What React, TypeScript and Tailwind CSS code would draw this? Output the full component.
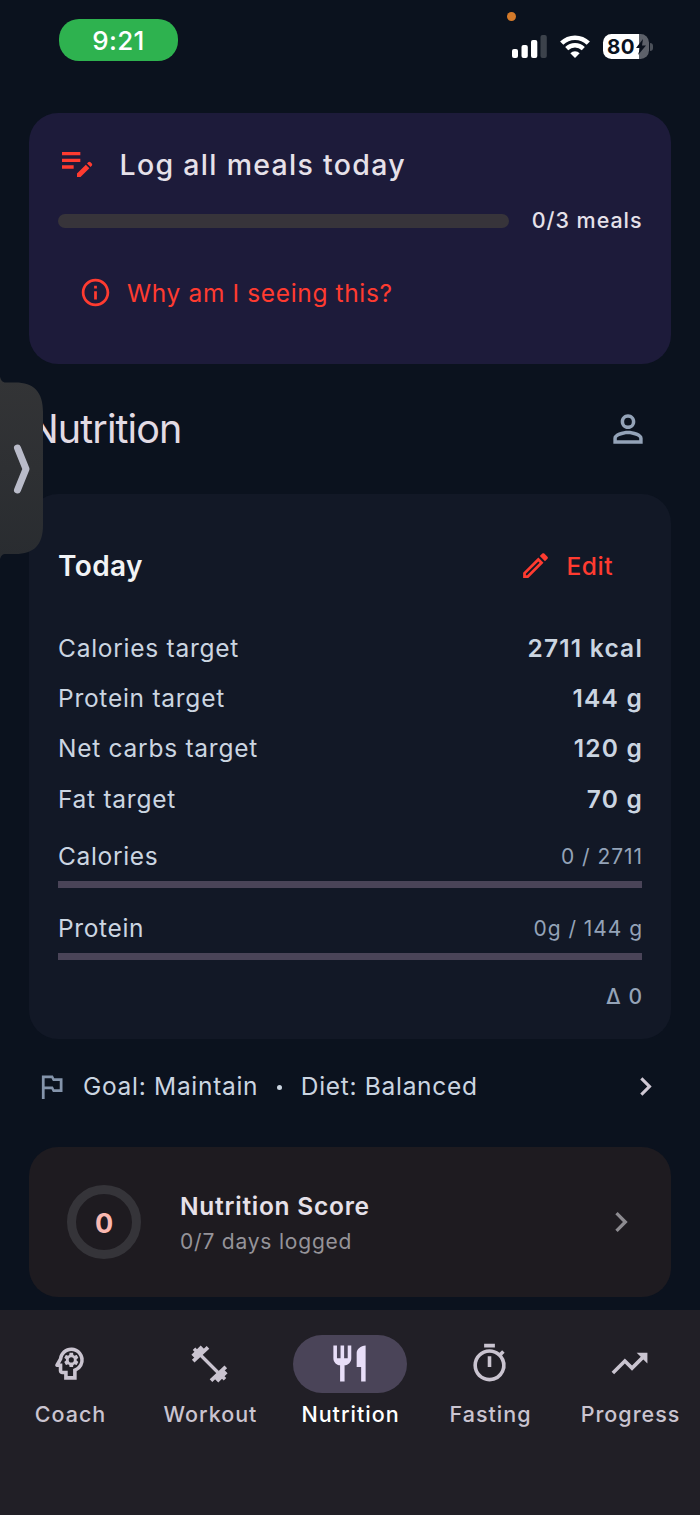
import React from "react";
import {
  MdChevronRight,
  MdEditNote,
  MdInfoOutline,
  MdOutlineEdit,
  MdOutlinedFlag,
  MdOutlinePsychology,
  MdOutlineTimer,
  MdPersonOutline,
  MdRestaurant,
  MdTrendingUp,
} from "react-icons/md";

const targets = [
  { label: "Calories target", value: "2711 kcal" },
  { label: "Protein target", value: "144 g" },
  { label: "Net carbs target", value: "120 g" },
  { label: "Fat target", value: "70 g" },
];

const progress = [
  { label: "Calories", value: "0 / 2711" },
  { label: "Protein", value: "0g / 144 g" },
];

function DumbbellIcon({ className }: { className?: string }) {
  return (
    <svg viewBox="0 0 43 43" className={className} fill="none" stroke="currentColor">
      <path d="M11 11.500 32 32.500" strokeWidth="3.200" />
      <path d="M5.200 19.200 20 5.400M37.800 24.800 23 38.600" strokeWidth="3.800" />
      <path d="M5.500 14.800 14.800 5.700M37.500 29.200 28.200 38.300" strokeWidth="6" />
      <path d="M6 6.800 10 10.800M37 37.200 33 33.200" strokeWidth="3.600" />
    </svg>
  );
}

const tabs = [
  { label: "Coach", Icon: MdOutlinePsychology },
  { label: "Workout", Icon: DumbbellIcon },
  { label: "Nutrition", Icon: MdRestaurant, active: true },
  { label: "Fasting", Icon: MdOutlineTimer },
  { label: "Progress", Icon: MdTrendingUp },
];

function StatusBar() {
  return (
    <header className="relative flex h-[113px] items-start justify-between pl-[59px] pr-[47px] pt-[19px]">
      <div className="flex h-[42px] w-[119px] items-center justify-center rounded-[20px] bg-[#2eb24f] pt-[1px] text-[26px] font-medium tracking-[0.3px] text-white">
        9:21
      </div>
      <span className="absolute left-[507px] top-[12px] h-[9px] w-[9px] rounded-full bg-[#d47a2a]" />
      <div className="flex items-center pt-[15px]">
        <svg width="36" height="25" viewBox="0 0 36 25" className="mr-[12px]">
          <rect x="0" y="15" width="6" height="9" rx="2" fill="#fff" />
          <rect x="9.5" y="11" width="6.3" height="13" rx="2" fill="#fff" />
          <rect x="19" y="6" width="6.3" height="18" rx="2" fill="#fff" />
          <rect x="28.5" y="1" width="6.3" height="23" rx="2" fill="#3c424b" />
        </svg>
        <svg width="31" height="25" viewBox="0 0 31 25" className="mr-[12px]">
          <path d="M1.700 9.200a19 19 0 0 1 26.600 0" fill="none" stroke="#fff" strokeWidth="4.600" />
          <path d="M6.700 14.600a12 12 0 0 1 16.600 0" fill="none" stroke="#fff" strokeWidth="4.400" />
          <path d="M15 24 10.300 19.200a6.800 6.800 0 0 1 9.400 0z" fill="#fff" />
        </svg>
        <div className="relative flex h-[25px] w-[46px] items-center overflow-hidden rounded-[8.500px] bg-[linear-gradient(90deg,#fff_0_36px,#5d616a_36px)] pl-[4px]">
          <span className="text-[20.500px] font-bold leading-[25px] tracking-[0.300px] text-[#0b121e]">80</span>
          <svg width="12" height="16" viewBox="0 0 12 16" className="absolute left-[32px] top-[5px]">
            <path d="M8 0 1 9h4l-2 7 8-9.500H7z" fill="#0b121e" />
          </svg>
        </div>
        <span className="ml-[1px] h-[8px] w-[3px] rounded-r-full bg-[#4b5059]" />
      </div>
    </header>
  );
}

function MealsCard() {
  return (
    <section className="mx-[29px] h-[251px] rounded-[29px] bg-[#1d1b3a] pl-[28.500px] pr-[29px] pt-[29px] text-[#e6e1e9]">
      <div className="flex h-[43px] items-center">
        <MdEditNote className="-ml-[1px] -mt-[3px] h-[40px] w-[40px] text-[#ff3b30]" />
        <h2 className="ml-[23px] pt-[3px] text-[28.500px] font-medium leading-none tracking-[1.300px]">Log all meals today</h2>
      </div>
      <div className="mt-[20px] flex h-[30px] items-center justify-between">
        <div className="mt-[1px] h-[14px] w-[451.500px] rounded-full bg-[#37343a]" />
        <span className="-mr-[0.500px] text-[21.500px] font-medium tracking-[0.950px]">0/3 meals</span>
      </div>
      <button className="ml-[21.500px] mt-[41px] flex h-[34px] items-center text-[#ff3b30]">
        <MdInfoOutline className="-mt-[1px] h-[33px] w-[33px]" />
        <span className="ml-[15px] text-[24.500px] tracking-[0.640px]">Why am I seeing this?</span>
      </button>
    </section>
  );
}

function PageTitle() {
  return (
    <div className="flex h-[130px] items-center justify-between pl-[29px] pr-[50px]">
      <h1 className="pt-[1px] text-[39.500px] font-normal leading-none tracking-[-0.900px] text-[#e2dbe4]">Nutrition</h1>
      <MdPersonOutline className="h-[44px] w-[44px] text-[#94a3b8]" />
    </div>
  );
}

function TodayCard() {
  return (
    <section className="mx-[29px] h-[545px] rounded-[29px] bg-[#121826] px-[29px] pt-[49px]">
      <div className="flex h-[46px] items-center justify-between pr-[29px]">
        <h2 className="text-[28px] font-semibold tracking-[0.400px] text-[#f1f3f5]">Today</h2>
        <button className="flex items-center text-[#ff3b30]">
          <MdOutlineEdit className="-mt-[1px] h-[33px] w-[33px]" />
          <span className="ml-[14.500px] text-[24.500px] font-medium tracking-[0.500px]">Edit</span>
        </button>
      </div>
      <div className="mt-[34px] text-[24.500px] text-[#cbd5e1]">
        {targets.map((t) => (
          <div key={t.label} className="flex h-[50.250px] items-center justify-between">
            <span className="tracking-[0.740px]">{t.label}</span>
            <span className="-mr-[1px] font-semibold tracking-[1.200px]">{t.value}</span>
          </div>
        ))}
      </div>
      <div className="mt-[14px] text-[#cbd5e1]">
        {progress.map((p) => (
          <div key={p.label} className="h-[72px]">
            <div className="flex h-[37px] items-center justify-between">
              <span className="text-[24.500px] tracking-[0.650px]">{p.label}</span>
              <span className="-mr-[1px] text-[21px] tracking-[0.950px] text-[#94a3b8]">{p.value}</span>
            </div>
            <div className="mt-[6px] h-[7px] bg-[#4a4458]" />
          </div>
        ))}
      </div>
      <p className="-mr-[1px] mt-[-1px] text-right text-[21px] font-medium tracking-[1px] text-[#94a3b8]">Δ 0</p>
    </section>
  );
}

function GoalRow() {
  return (
    <div className="flex h-[108px] items-center pb-[14px] pl-[35px] pr-[36px] text-[24.500px] text-[#cbd5e1]">
      <MdOutlinedFlag className="h-[33px] w-[33px] text-[#8494ab]" />
      <span className="ml-[15px] tracking-[0.700px]">Goal: Maintain</span>
      <span className="ml-[18.500px] mr-[19px] mt-[3px] h-[5px] w-[5px] rounded-full bg-[#cbd5e1]" />
      <span className="tracking-[0.700px]">Diet: Balanced</span>
      <MdChevronRight className="ml-auto h-[37px] w-[37px] text-[#cfc8d4]" />
    </div>
  );
}

function ScoreCard() {
  return (
    <section className="mx-[29px] flex h-[150px] items-center rounded-[29px] bg-[#1e1b20] pl-[38px] pr-[30px]">
      <div className="flex h-[74px] w-[74px] items-center justify-center rounded-full border-[9px] border-[#353439] pt-[4px] text-[27px] font-bold text-[#f9b9b1]">
        0
      </div>
      <div className="ml-[39px] pt-[4px]">
        <h2 className="text-[24.500px] font-semibold leading-[35px] tracking-[0.750px] text-[#e6e1e9]">Nutrition Score</h2>
        <p className="text-[21px] leading-[36px] tracking-[0.800px] text-[#959399]">0/7 days logged</p>
      </div>
      <MdChevronRight className="ml-auto h-[40px] w-[40px] text-[#8d8b90]" />
    </section>
  );
}

function BottomNav() {
  return (
    <nav className="mt-[13px] flex h-[205px] bg-[#211f26] pt-[25px]">
      {tabs.map(({ label, Icon, active }) => (
        <button key={label} className={`flex w-[140px] flex-col items-center ${active ? "text-white" : "text-[#cac4d0]"}`}>
          <span
            className={`flex h-[57.500px] w-[114px] items-center justify-center rounded-full pr-[1px] ${
              active ? "bg-[#4a4458] text-[#e8def8]" : ""
            }`}
          >
            <Icon className="h-[43px] w-[43px]" />
          </span>
          <span className="mt-[5px] whitespace-nowrap pl-[1px] text-[21.500px] font-medium leading-[32px] tracking-[1px]">{label}</span>
        </button>
      ))}
    </nav>
  );
}

function SideHandle() {
  return (
    <svg width="44" height="192" viewBox="0 0 44 192" className="absolute left-0 top-[372px]">
      <defs>
        <linearGradient id="handle" x1="0" y1="0" x2="0" y2="1">
          <stop offset="0" stopColor="#333436" />
          <stop offset="1" stopColor="#292c30" />
        </linearGradient>
      </defs>
      <path
        d="M0 5C1 8 2 10.500 6 10.500H15C34 10.500 43 20 43 40V153C43 173 34 182 15 182H6C2 182 1 184 0 187Z"
        fill="url(#handle)"
      />
      <path d="M17.500 76 26 97 17.500 118" fill="none" stroke="#b9bbc9" strokeWidth="7" strokeLinecap="round" strokeLinejoin="round" />
    </svg>
  );
}

export default function App() {
  return (
    <div className="relative h-[1515px] w-[700px] overflow-hidden bg-[#0b121e] font-['Inter',sans-serif]">
      <StatusBar />
      <MealsCard />
      <PageTitle />
      <TodayCard />
      <GoalRow />
      <ScoreCard />
      <BottomNav />
      <SideHandle />
    </div>
  );
}
